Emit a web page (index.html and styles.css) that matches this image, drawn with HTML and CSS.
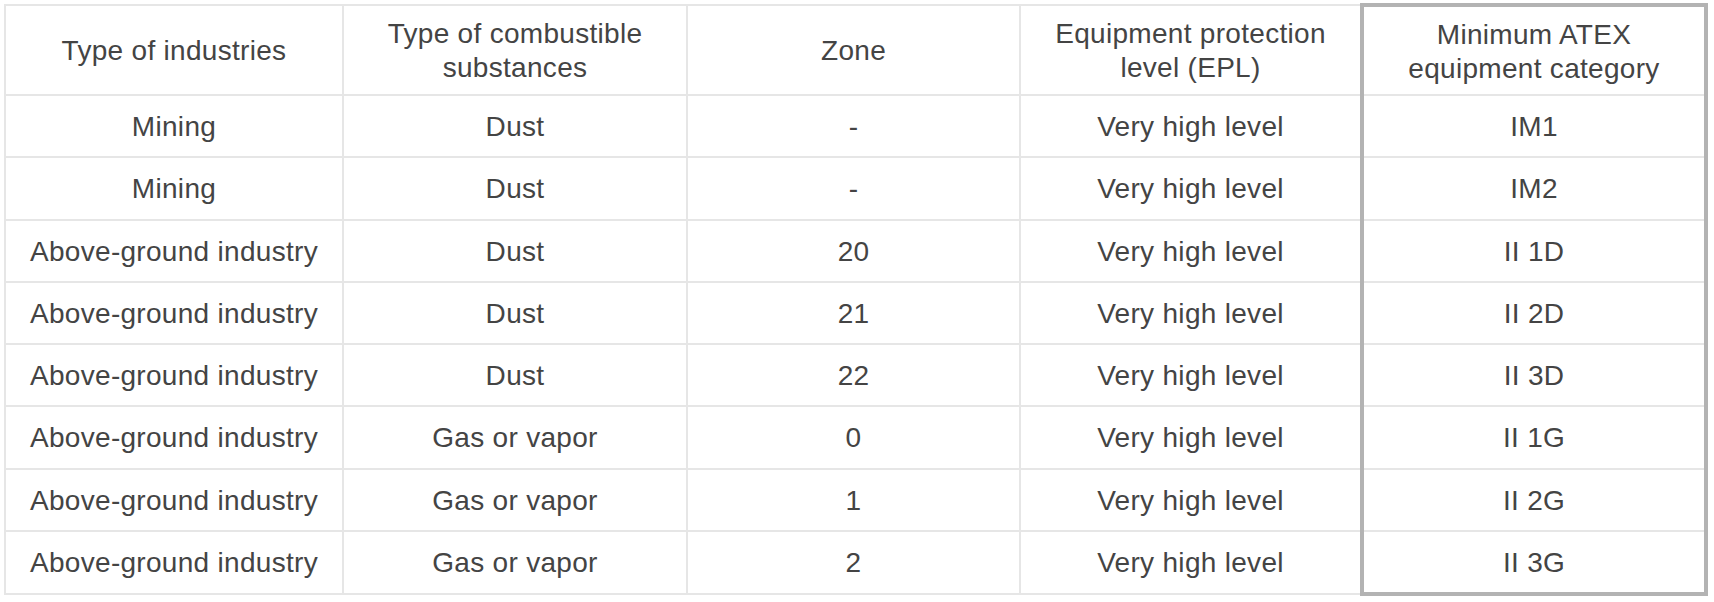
FILE: index.html
```html
<!DOCTYPE html>
<html lang="en">
<head>
<meta charset="utf-8">
<title>ATEX categories</title>
<link rel="stylesheet" href="styles.css">
</head>
<body>
<table class="atex">
  <colgroup>
    <col class="c1"><col class="c2"><col class="c3"><col class="c4"><col class="c5">
  </colgroup>
  <thead>
    <tr class="head">
      <th>Type of industries</th>
      <th>Type of combustible substances</th>
      <th>Zone</th>
      <th>Equipment protection level (EPL)</th>
      <th class="hl first">Minimum ATEX equipment category</th>
    </tr>
  </thead>
  <tbody>
    <tr><td>Mining</td><td>Dust</td><td>-</td><td>Very high level</td><td class="hl">IM1</td></tr>
    <tr><td>Mining</td><td>Dust</td><td>-</td><td>Very high level</td><td class="hl">IM2</td></tr>
    <tr><td>Above-ground industry</td><td>Dust</td><td>20</td><td>Very high level</td><td class="hl">II 1D</td></tr>
    <tr><td>Above-ground industry</td><td>Dust</td><td>21</td><td>Very high level</td><td class="hl">II 2D</td></tr>
    <tr><td>Above-ground industry</td><td>Dust</td><td>22</td><td>Very high level</td><td class="hl">II 3D</td></tr>
    <tr><td>Above-ground industry</td><td>Gas or vapor</td><td>0</td><td>Very high level</td><td class="hl">II 1G</td></tr>
    <tr><td>Above-ground industry</td><td>Gas or vapor</td><td>1</td><td>Very high level</td><td class="hl">II 2G</td></tr>
    <tr><td>Above-ground industry</td><td>Gas or vapor</td><td>2</td><td>Very high level</td><td class="hl last">II 3G</td></tr>
  </tbody>
</table>
</body>
</html>
```

FILE: styles.css
```css
html, body {
  margin: 0;
  padding: 0;
  background: #ffffff;
}

.atex {
  margin: 3px 0 0 4px;
  border-collapse: collapse;
  table-layout: fixed;
  width: 1701px;
  font-family: "Liberation Sans", Arial, sans-serif;
  font-size: 28px;
  line-height: 34px;
  letter-spacing: 0.3px;
  color: #444444;
}

.c1 { width: 338px; }
.c2 { width: 344px; }
.c3 { width: 333px; }
.c4 { width: 342px; }
.c5 { width: 344px; }

.atex th,
.atex td {
  border: 2px solid #e6e6e6;
  padding: 2px 10px 0;
  text-align: center;
  vertical-align: middle;
  font-weight: normal;
}

.atex .head th {
  height: 85px;
}

.atex tbody td {
  height: 58.25px;
}

.atex .hl {
  border-left: 4px solid #b3b3b3;
  border-right: 4px solid #b3b3b3;
}

.atex .hl.first {
  border-top: 4px solid #b3b3b3;
}

.atex .hl.last {
  border-bottom: 4px solid #b3b3b3;
}
```
